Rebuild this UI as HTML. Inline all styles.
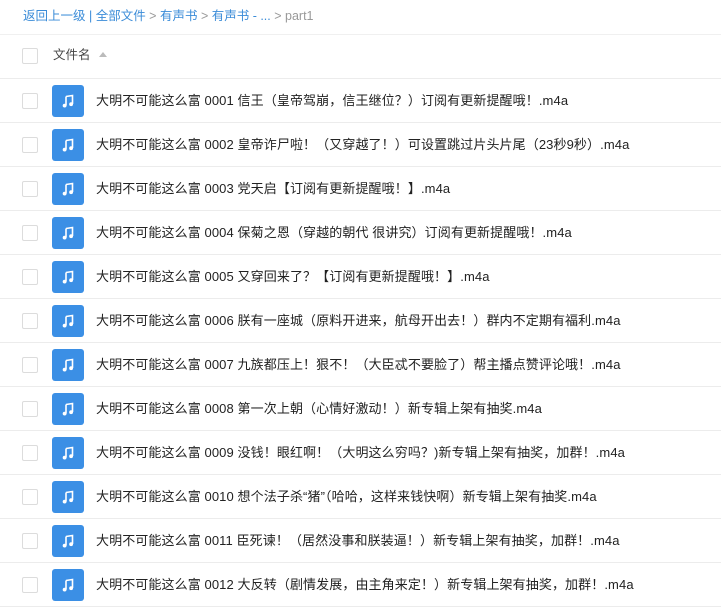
<!DOCTYPE html>
<html><head><meta charset="utf-8"><style>
body{margin:0;width:721px;height:612px;overflow:hidden;background:#fff;font-family:"Liberation Sans","Noto Sans CJK SC",sans-serif;color:#333;}
.bc{height:35px;line-height:33px;padding-left:23px;font-size:12.5px;color:#3b8cd8;border-bottom:1px solid #f0f0f0;box-sizing:border-box}
.bc .g{color:#999}
.hd{height:44px;position:relative;border-bottom:1px solid #ececec;box-sizing:border-box}
.cb{position:absolute;left:22px;width:14px;height:14px;border:1px solid #dcdcdc;border-radius:2px;background:#fff}
.hd .cb{top:13px}
.hd .t{position:absolute;left:53px;top:0;line-height:41px;font-size:12.5px;color:#444}
.tri{position:absolute;left:99px;top:17px;width:0;height:0;border-left:4px solid transparent;border-right:4px solid transparent;border-bottom:5px solid #bbb}
.r{height:44px;position:relative;border-bottom:1px solid #ececec;box-sizing:border-box}
.r .cb{top:14px}
.ic{position:absolute;left:52px;top:6px;width:32px;height:32px;background:#3b8fe5;border-radius:3px}
.ic svg{position:absolute;left:8px;top:8px}
.r .t{position:absolute;left:96px;top:0;line-height:44px;font-size:13px;letter-spacing:0.1px;color:#222;white-space:nowrap}
</style></head><body>
<div class="bc">返回上一级 | 全部文件 <span class="g">&gt;</span> 有声书 <span class="g">&gt;</span> 有声书 - ... <span class="g">&gt; part1</span></div>
<div class="hd"><div class="cb"></div><div class="t">文件名</div><div class="tri"></div></div>
<div id="rows"></div>
<script>
var n=["大明不可能这么富 0001 信王（皇帝驾崩，信王继位？）订阅有更新提醒哦！.m4a",
"大明不可能这么富 0002 皇帝诈尸啦！（又穿越了！）可设置跳过片头片尾（23秒9秒）.m4a",
"大明不可能这么富 0003 党天启【订阅有更新提醒哦！】.m4a",
"大明不可能这么富 0004 保菊之恩（穿越的朝代 很讲究）订阅有更新提醒哦！.m4a",
"大明不可能这么富 0005 又穿回来了？【订阅有更新提醒哦！】.m4a",
"大明不可能这么富 0006 朕有一座城（原料开进来，航母开出去！）群内不定期有福利.m4a",
"大明不可能这么富 0007 九族都压上！狠不！（大臣忒不要脸了）帮主播点赞评论哦！.m4a",
"大明不可能这么富 0008 第一次上朝（心情好激动！）新专辑上架有抽奖.m4a",
"大明不可能这么富 0009 没钱！眼红啊！（大明这么穷吗？)新专辑上架有抽奖，加群！.m4a",
"大明不可能这么富 0010 想个法子杀“猪”（哈哈，这样来钱快啊）新专辑上架有抽奖.m4a",
"大明不可能这么富 0011 臣死谏！（居然没事和朕装逼！）新专辑上架有抽奖，加群！.m4a",
"大明不可能这么富 0012 大反转（剧情发展，由主角来定！）新专辑上架有抽奖，加群！.m4a"];
var h="";n.forEach(function(s){h+='<div class="r"><div class="cb"></div><div class="ic"><svg width="16" height="16" viewBox="0 0 16 16"><path d="M6 3.5 L12.5 2.5 V11" stroke="#fff" stroke-width="1.6" fill="none"/><path d="M6 3.5 V12.5" stroke="#fff" stroke-width="1.6"/><circle cx="4.6" cy="12.6" r="1.9" fill="#fff"/><circle cx="11.1" cy="11.2" r="1.9" fill="#fff"/></svg></div><div class="t">'+s+'</div></div>';});
document.getElementById("rows").innerHTML=h;
</script>
</body></html>
